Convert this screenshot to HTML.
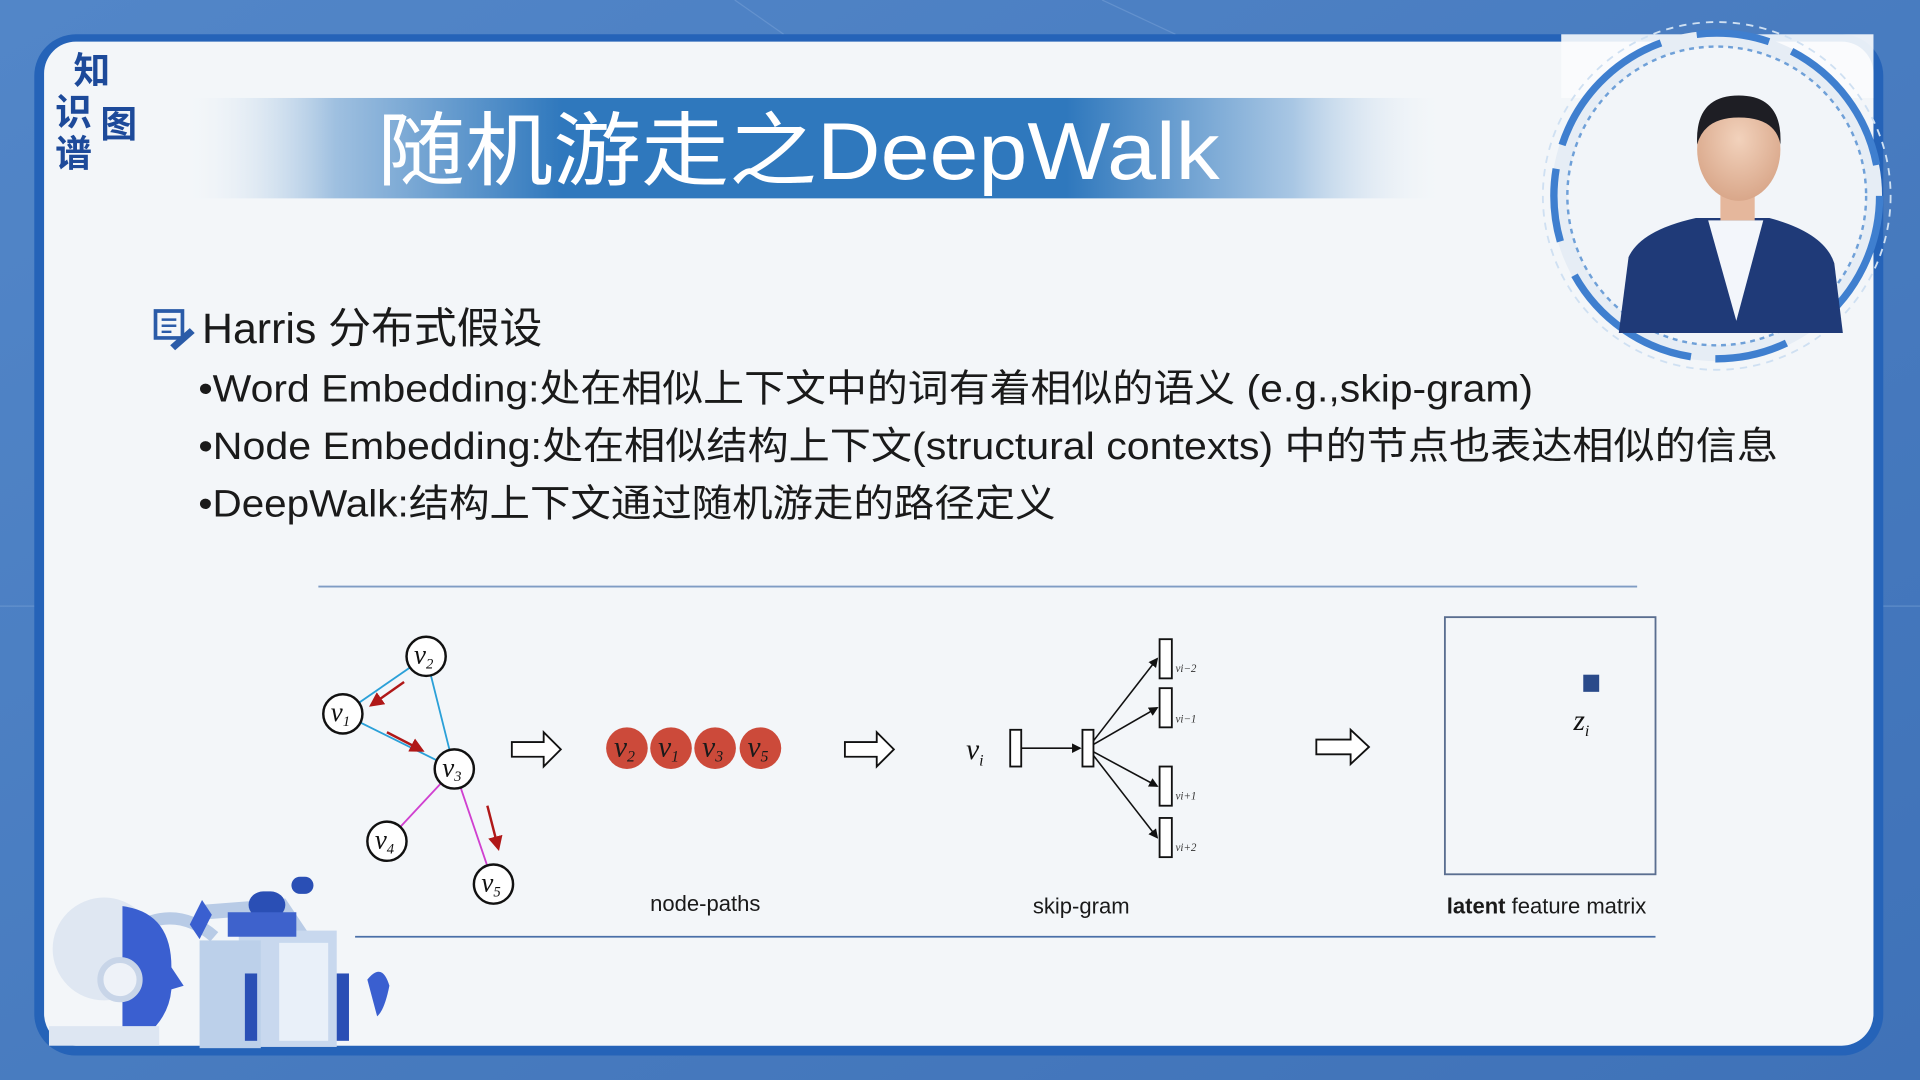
<!DOCTYPE html>
<html><head><meta charset="utf-8"><style>
html,body{margin:0;padding:0;width:1920px;height:1080px;overflow:hidden;background:#4a7cc0}
svg{display:block}
text{font-family:"Liberation Sans","Noto Sans CJK SC",sans-serif}
text.m, .m text{font-family:"Liberation Serif",serif;font-style:italic}
</style></head><body>
<svg width="1920" height="1080" viewBox="0 0 1568 882" xmlns="http://www.w3.org/2000/svg">
<defs>
<linearGradient id="bg" x1="0" y1="0" x2="1" y2="1"><stop offset="0" stop-color="#5286c8"/><stop offset="1" stop-color="#3f72b8"/></linearGradient>
<linearGradient id="ban" x1="0" y1="0" x2="1" y2="0">
<stop offset="0" stop-color="#f3f6f9" stop-opacity="0"/><stop offset="0.12" stop-color="#9fc0e0"/><stop offset="0.3" stop-color="#2f78bd"/><stop offset="0.7" stop-color="#2f78bd"/><stop offset="0.88" stop-color="#a9c7e4"/><stop offset="1" stop-color="#f3f6f9" stop-opacity="0"/></linearGradient>
<radialGradient id="face" cx="0.5" cy="0.4" r="0.6"><stop offset="0" stop-color="#f2d2bc"/><stop offset="1" stop-color="#d9a78a"/></radialGradient>
<marker id="ar" markerWidth="6" markerHeight="6" refX="5" refY="3" orient="auto"><path d="M0,0 L6,3 L0,6 z" fill="#b01818"/></marker>
<marker id="ak" markerWidth="6" markerHeight="6" refX="5" refY="3" orient="auto"><path d="M0,0 L6,3 L0,6 z" fill="#111"/></marker>
</defs>
<rect width="1568" height="882" fill="url(#bg)"/>
<g stroke="#7aa3d8" stroke-width="1" opacity="0.5">
<line x1="0" y1="495" x2="30" y2="495"/><line x1="1535" y1="495" x2="1568" y2="495"/>
<line x1="600" y1="0" x2="640" y2="28"/><line x1="900" y1="0" x2="960" y2="28"/>
</g>
<rect x="28" y="28" width="1510" height="834" rx="34" fill="#2563b8"/>
<rect x="36" y="34" width="1494" height="820" rx="26" fill="#f3f6f9"/>
<rect x="1275" y="28" width="255" height="52" fill="#fbfcfd" opacity="0.9"/>
<text x="60" y="68" font-size="30" font-weight="bold" fill="#1d4a9a">知</text>
<text x="45" y="102" font-size="30" font-weight="bold" fill="#1d4a9a">识</text>
<text x="82" y="112" font-size="30" font-weight="bold" fill="#1d4a9a">图</text>
<text x="45" y="136" font-size="30" font-weight="bold" fill="#1d4a9a">谱</text>
<rect x="150" y="80" width="1030" height="82" fill="url(#ban)"/>
<text x="308" y="146" font-size="66" fill="#fff" textLength="688" lengthAdjust="spacingAndGlyphs">随机游走之DeepWalk</text>
<circle cx="1402" cy="160" r="135" fill="#e6edf5"/>
<circle cx="1402" cy="160" r="133" fill="none" stroke="#3f7fcf" stroke-width="6" stroke-dasharray="120 30 60 20"/>
<circle cx="1402" cy="160" r="122" fill="#f2f5f9" stroke="#6fa0d8" stroke-width="2" stroke-dasharray="4 4"/>
<circle cx="1402" cy="160" r="142" fill="none" stroke="#cfe0f2" stroke-width="1.5" stroke-dasharray="6 5"/>
<path d="M1322,272 L1330,210 Q1340,188 1385,178 L1445,178 Q1490,190 1498,215 L1505,272 Z" fill="#1f3a78"/>
<path d="M1395,180 L1418,262 L1440,180 Z" fill="#f3f6fb"/>
<rect x="1405" y="150" width="28" height="30" fill="#e5b79c"/>
<ellipse cx="1420" cy="122" rx="34" ry="42" fill="url(#face)"/>
<path d="M1386,118 Q1384,78 1420,78 Q1456,78 1454,118 Q1450,96 1420,96 Q1392,96 1386,118Z" fill="#1e1e24"/>
<g transform="translate(125,252)">
<path d="M2,2 h22 v22 h-22z" fill="none" stroke="#2a5ba8" stroke-width="3"/>
<path d="M7,9h12M7,14h12M7,19h8" stroke="#2a5ba8" stroke-width="2"/>
<path d="M14,30 l16,-14 l4,4 l-16,14z" fill="#2a5ba8"/>
</g>
<text x="165" y="280" font-size="35" fill="#1a1a1a">Harris 分布式假设</text>
<g font-size="31" fill="#1a1a1a">
<text x="162" y="328" textLength="1090" lengthAdjust="spacingAndGlyphs">•Word Embedding:处在相似上下文中的词有着相似的语义 (e.g.,skip-gram)</text>
<text x="162" y="375" textLength="1290" lengthAdjust="spacingAndGlyphs">•Node Embedding:处在相似结构上下文(structural contexts) 中的节点也表达相似的信息</text>
<text x="162" y="422" textLength="700" lengthAdjust="spacingAndGlyphs">•DeepWalk:结构上下文通过随机游走的路径定义</text>
</g>
<line x1="260" y1="479" x2="1337" y2="479" stroke="#7f9cc4" stroke-width="1.5"/>
<line x1="290" y1="765" x2="1352" y2="765" stroke="#4a6fa8" stroke-width="1.5"/>
<g stroke-width="1.5">
<line x1="280" y1="583" x2="348" y2="536" stroke="#2aa0d8"/>
<line x1="348" y1="536" x2="371" y2="628" stroke="#2aa0d8"/>
<line x1="280" y1="583" x2="371" y2="628" stroke="#2aa0d8"/>
<line x1="371" y1="628" x2="316" y2="687" stroke="#d040d0"/>
<line x1="371" y1="628" x2="403" y2="722" stroke="#d040d0"/>
<line x1="330" y1="557" x2="303" y2="576" stroke="#b01818" stroke-width="2" marker-end="url(#ar)"/>
<line x1="316" y1="598" x2="345" y2="613" stroke="#b01818" stroke-width="2" marker-end="url(#ar)"/>
<line x1="398" y1="658" x2="407" y2="693" stroke="#b01818" stroke-width="2" marker-end="url(#ar)"/>
</g>
<g fill="#fff" stroke="#111" stroke-width="2">
<circle cx="348" cy="536" r="16"/><circle cx="280" cy="583" r="16"/><circle cx="371" cy="628" r="16"/><circle cx="316" cy="687" r="16"/><circle cx="403" cy="722" r="16"/>
</g>
<g class="m" font-size="22" fill="#111" text-anchor="middle">
<text x="346" y="542">v<tspan font-size="12" dy="4">2</tspan></text>
<text x="278" y="589">v<tspan font-size="12" dy="4">1</tspan></text>
<text x="369" y="634">v<tspan font-size="12" dy="4">3</tspan></text>
<text x="314" y="693">v<tspan font-size="12" dy="4">4</tspan></text>
<text x="401" y="728">v<tspan font-size="12" dy="4">5</tspan></text>
</g>
<g fill="#fff" stroke="#111" stroke-width="1.5">
<path d="M418,606 h26 v-8 l14,14 l-14,14 v-8 h-26z"/>
<path d="M690,606 h26 v-8 l14,14 l-14,14 v-8 h-26z"/>
<path d="M1075,604 h28 v-8 l15,14 l-15,14 v-8 h-28z"/>
</g>
<g fill="#cc4a3a">
<circle cx="512" cy="611" r="17"/><circle cx="548" cy="611" r="17"/><circle cx="584" cy="611" r="17"/><circle cx="621" cy="611" r="17"/>
</g>
<g class="m" font-size="24" fill="#1a1a1a" text-anchor="middle">
<text x="510" y="618">v<tspan font-size="13" dy="4">2</tspan></text>
<text x="546" y="618">v<tspan font-size="13" dy="4">1</tspan></text>
<text x="582" y="618">v<tspan font-size="13" dy="4">3</tspan></text>
<text x="619" y="618">v<tspan font-size="13" dy="4">5</tspan></text>
</g>
<text class="m" x="789" y="620" font-size="24" fill="#111">v<tspan font-size="13" dy="5">i</tspan></text>
<g fill="#fff" stroke="#111" stroke-width="1.5">
<rect x="825" y="596" width="9" height="30"/><rect x="884" y="596" width="9" height="30"/>
<rect x="947" y="522" width="10" height="32"/><rect x="947" y="562" width="10" height="32"/>
<rect x="947" y="626" width="10" height="32"/><rect x="947" y="668" width="10" height="32"/>
</g>
<g stroke="#111" stroke-width="1.3">
<line x1="834" y1="611" x2="882" y2="611" marker-end="url(#ak)"/>
<line x1="893" y1="605" x2="945" y2="538" marker-end="url(#ak)"/>
<line x1="893" y1="608" x2="945" y2="578" marker-end="url(#ak)"/>
<line x1="893" y1="614" x2="945" y2="642" marker-end="url(#ak)"/>
<line x1="893" y1="617" x2="945" y2="684" marker-end="url(#ak)"/>
</g>
<g class="m" font-size="9" fill="#333">
<text x="960" y="549">vi−2</text><text x="960" y="590">vi−1</text><text x="960" y="653">vi+1</text><text x="960" y="695">vi+2</text>
</g>
<rect x="1180" y="504" width="172" height="210" fill="none" stroke="#5a6e90" stroke-width="1.5"/>
<rect x="1293" y="551" width="13" height="14" fill="#2a4a8a"/>
<text class="m" x="1285" y="596" font-size="24" fill="#111">z<tspan font-size="13" dy="5">i</tspan></text>
<g font-size="18" fill="#1a1a1a" text-anchor="middle">
<text x="576" y="744">node-paths</text>
<text x="883" y="746">skip-gram</text>
<text x="1263" y="746"><tspan font-weight="bold">latent</tspan> feature matrix</text>
</g>
<g>
<path d="M100,765 Q140,735 175,765" fill="none" stroke="#b8cbe6" stroke-width="10"/>
<path d="M165,745 L230,740 L250,770" fill="none" stroke="#b8cbe6" stroke-width="12"/>
<rect x="195" y="760" width="80" height="95" fill="#c8d8ee"/>
<rect x="163" y="768" width="50" height="88" fill="#bcd0ea"/>
<rect x="203" y="728" width="30" height="22" rx="12" fill="#2a4fb5"/>
<rect x="238" y="716" width="18" height="14" rx="7" fill="#2a4fb5"/>
<rect x="186" y="745" width="56" height="20" fill="#3e62cc"/>
<rect x="228" y="770" width="40" height="80" fill="#e9f0f9"/>
<circle cx="85" cy="775" r="42" fill="#dfe7f2"/>
<path d="M100,740 Q140,745 140,790 L150,805 L140,808 Q138,830 120,845 L100,845Z" fill="#3a5fd0"/>
<circle cx="98" cy="800" r="16" fill="#eef2f8" stroke="#c8d5e8" stroke-width="5"/>
<rect x="40" y="838" width="90" height="16" fill="#dde6f2"/>
<path d="M155,755 l10,-20 l8,12 l-10,20z" fill="#3a5fd0"/>
<rect x="200" y="795" width="10" height="55" fill="#2a4fb5"/>
<rect x="275" y="795" width="10" height="55" fill="#2a4fb5"/>
<path d="M300,800 q12,-15 18,5 q-4,20 -10,25 z" fill="#3a5fd0"/>
</g>
</svg>
</body></html>
